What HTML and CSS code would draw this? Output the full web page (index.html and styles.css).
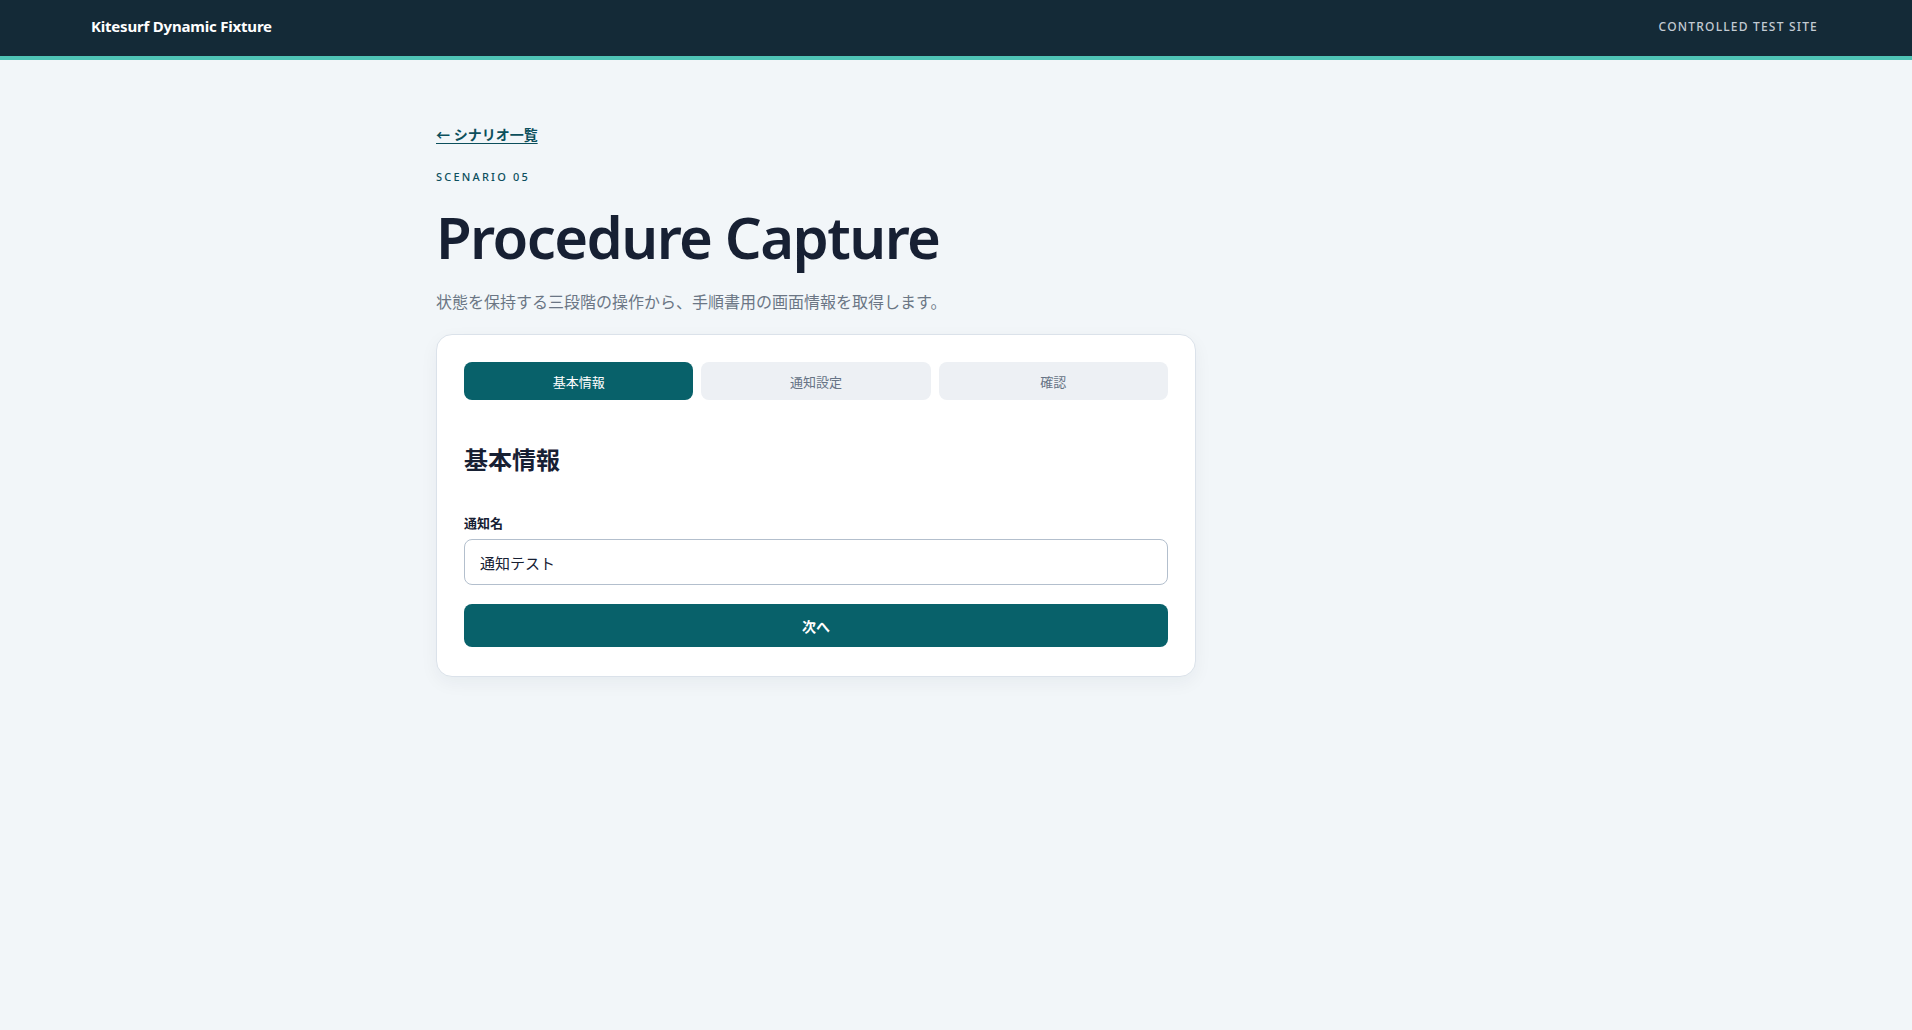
FILE: index.html
```html
<!DOCTYPE html>
<html lang="ja">
<head>
<meta charset="utf-8">
<title>Procedure Capture</title>
<link rel="stylesheet" href="styles.css">
</head>
<body>
<header class="site-header">
  <div class="brand">Kitesurf Dynamic Fixture</div>
  <div class="site-tag">CONTROLLED TEST SITE</div>
</header>
<main class="page">
  <a class="back-link" href="#">← シナリオ一覧</a>
  <p class="eyebrow">SCENARIO 05</p>
  <h1 class="title">Procedure Capture</h1>
  <p class="lead">状態を保持する三段階の操作から、手順書用の画面情報を取得します。</p>
  <section class="card">
    <div class="steps">
      <button class="step active" type="button">基本情報</button>
      <button class="step" type="button">通知設定</button>
      <button class="step" type="button">確認</button>
    </div>
    <h2 class="section-title">基本情報</h2>
    <label class="field-label" for="name">通知名</label>
    <input class="field-input" id="name" type="text" value="通知テスト">
    <button class="primary" type="button">次へ</button>
  </section>
</main>
</body>
</html>
```

FILE: styles.css
```css
* { box-sizing: border-box; }
html, body { margin: 0; padding: 0; }
body {
  background: #f2f6f9;
  font-family: "Noto Sans", "Noto Sans CJK JP", sans-serif;
  color: #172033;
  min-height: 1030px;
}
.site-header {
  height: 60px;
  background: #142a37;
  border-bottom: 4px solid #4fc3b5;
  display: flex;
  align-items: center;
  justify-content: space-between;
  padding: 0 94px 4px 91px;
}
.brand {
  color: #ffffff;
  font-size: 15px;
  font-weight: 700;
  letter-spacing: -0.2px;
}
.site-tag {
  color: #c3cbd3;
  font-size: 12px;
  font-weight: 500;
  letter-spacing: 1.2px;
}
.page {
  max-width: 1040px;
  margin: 0 auto;
  padding-top: 63px;
}
.back-link {
  display: inline-block;
  color: #0c4f5c;
  font-size: 14px;
  font-weight: 600;
  line-height: 22px;
  text-decoration: underline;
  text-underline-offset: 3px;
}
.eyebrow {
  margin: 23px 0 0;
  color: #0d4f5e;
  font-size: 11px;
  font-weight: 500;
  letter-spacing: 2.2px;
  line-height: 16px;
}
.title {
  margin: 16px 0 0;
  font-size: 58px;
  font-weight: 600;
  letter-spacing: -1.6px;
  line-height: 72px;
  color: #172033;
}
.lead {
  margin: 17px 0 0;
  color: #6b7685;
  font-size: 16px;
  line-height: 24px;
}
.card {
  margin-top: 20px;
  max-width: 760px;
  background: #ffffff;
  border: 1px solid #dbe2ea;
  border-radius: 16px;
  padding: 27px 27px 29px;
  box-shadow: 0 6px 18px rgba(20, 42, 55, 0.05);
}
.steps {
  display: grid;
  grid-template-columns: repeat(3, 1fr);
  gap: 8px;
}
.step {
  height: 38px;
  border: 0;
  border-radius: 8px;
  background: #edf0f4;
  color: #667385;
  font-family: inherit;
  font-size: 13px;
  padding: 0;
}
.step.active {
  background: #08616a;
  color: #ffffff;
}
.section-title {
  margin: 44px 0 0;
  font-size: 24px;
  font-weight: 700;
  line-height: 32px;
  color: #172033;
}
.field-label {
  display: block;
  margin-top: 37px;
  font-size: 13px;
  font-weight: 700;
  line-height: 20px;
  color: #172033;
}
.field-input {
  display: block;
  width: 100%;
  height: 46px;
  margin-top: 6px;
  border: 1px solid #b3bfcd;
  border-radius: 8px;
  padding: 0 15px;
  font-family: inherit;
  font-size: 15px;
  color: #172033;
  background: #ffffff;
}
.primary {
  display: block;
  width: 100%;
  height: 43px;
  margin-top: 19px;
  border: 0;
  border-radius: 8px;
  background: #08616a;
  color: #ffffff;
  font-family: inherit;
  font-size: 14px;
  font-weight: 700;
}
```
